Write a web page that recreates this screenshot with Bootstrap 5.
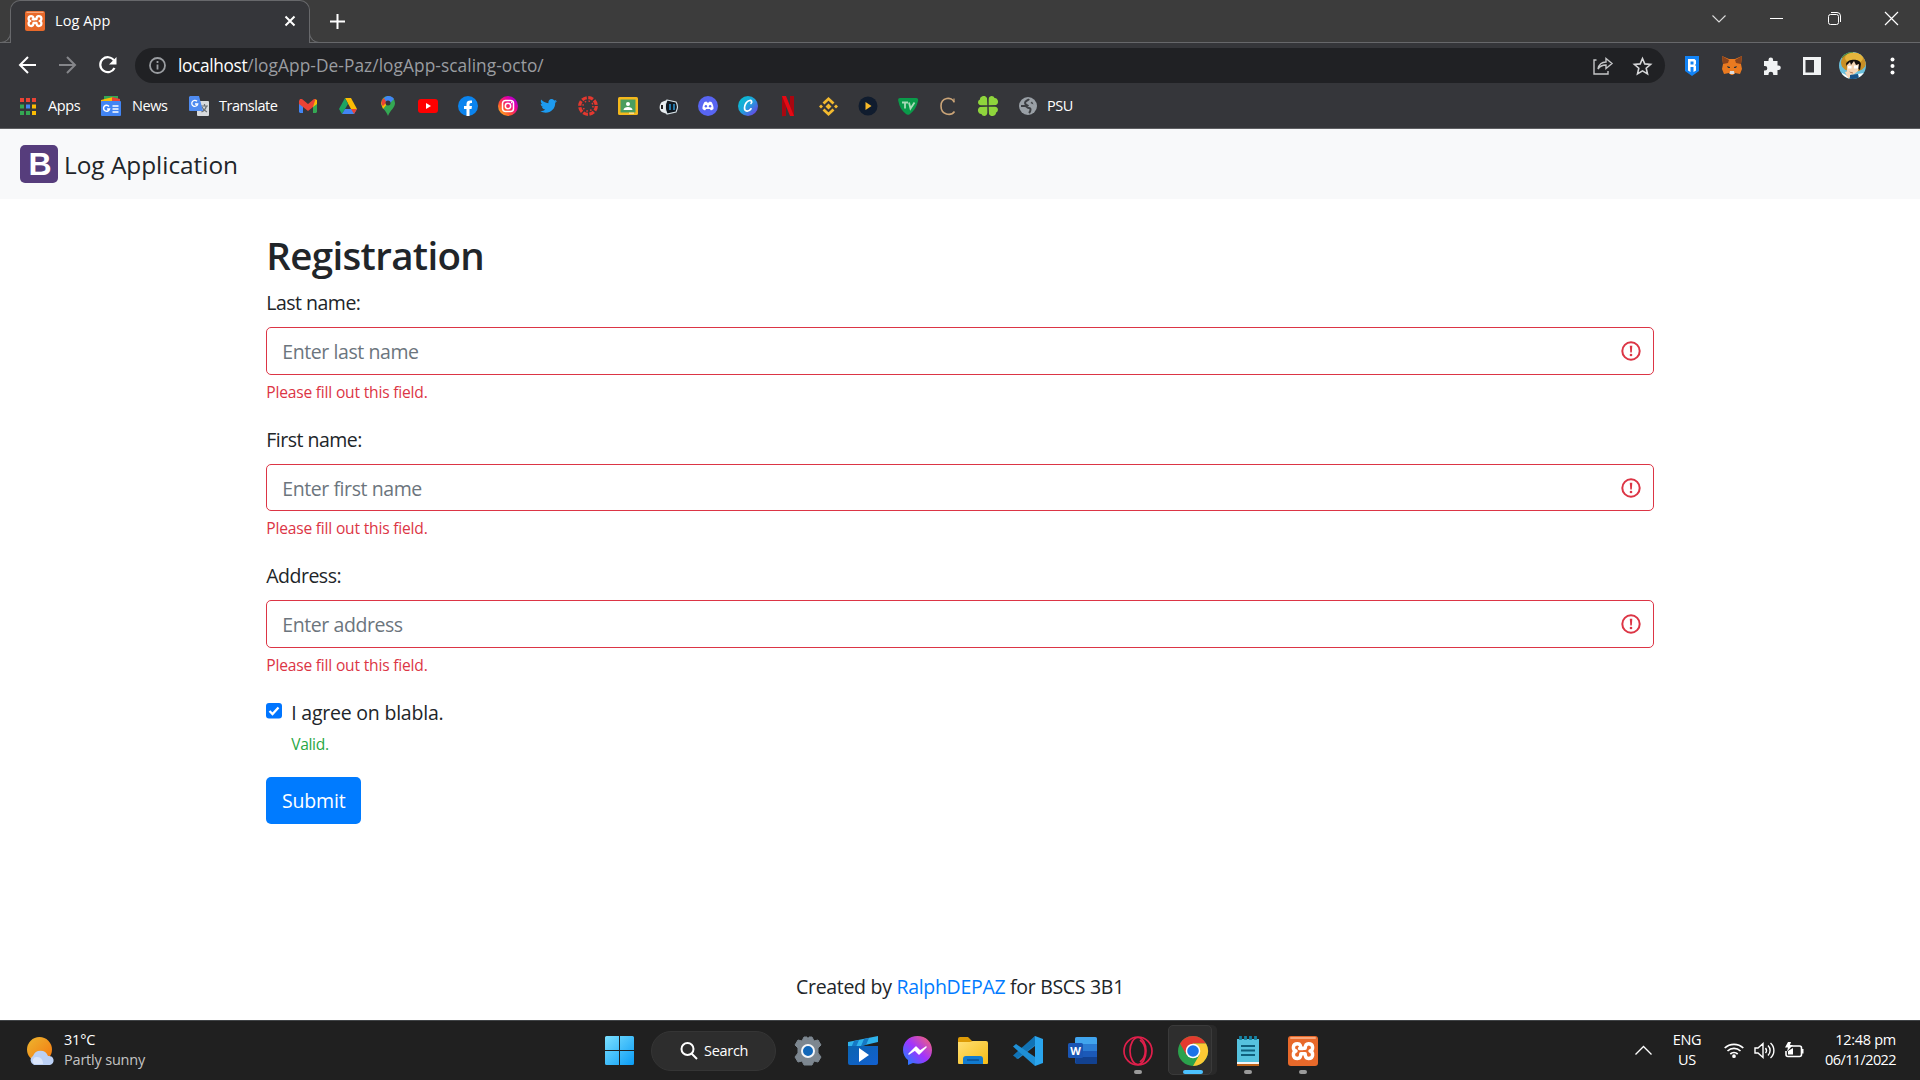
<!DOCTYPE html>
<html lang="en">
<head>
<meta charset="utf-8">
<title>Log App</title>
<link href="https://cdn.jsdelivr.net/npm/bootstrap@5.3.0/dist/css/bootstrap.min.css" rel="stylesheet">
<style>
html{font-size:20px}
body{width:1920px;height:1080px;overflow:hidden;background:#fff;color:#212529;font-family:"Open Sans","Noto Sans",sans-serif;font-size:19.5px;line-height:30px;letter-spacing:-.3px}
svg{display:block;flex:none;overflow:visible}
.defs{position:absolute}
.browser{font-size:14.5px;line-height:20px;letter-spacing:-.4px;color:#fff;background:#35363a}
.tabstrip{height:43px;background:#3c3c3c;padding-left:10px;box-shadow:inset 0 -1px #67686b}
.tab{position:relative;width:300px;height:43px;background:#35363a;border:1px solid #67686b;border-bottom:0;border-radius:10px 10px 0 0;padding:0 14px 2px;letter-spacing:.1px}
.tab::before,.tab::after{content:"";position:absolute;bottom:0;width:10px;height:10px;border:1px solid #67686b;border-top:0}
.tab::before{left:-10px;border-left:0;border-radius:0 0 10px 0}
.tab::after{right:-10px;border-right:0;border-radius:0 0 0 10px}
.newtab{margin-left:20px}
.winbtns{padding:0 22px 6px 0;gap:44.4px}
.toolbar{height:45px}
.omni{width:1530px;height:35px;border-radius:18px;background:#202124;font-size:17.3px;letter-spacing:-.35px}
.omni .dim{color:#9a9da1;letter-spacing:.07px}
.site{margin:0 12px 0 14px}
.star{margin:0 13px 0 20px}
.exts{margin-left:7px}
.marks{height:41px;padding:0 0 4px 20px;border-bottom:1px solid #5e5f62}
.cell40{width:40px;display:flex;justify-content:center;align-items:center}
.topnav{height:70px;background:#f8f9fa;padding:0 20px;font-size:24.4px;letter-spacing:-.02px}
.topnav span{margin-left:6px;padding-top:2px}
.regwrap{max-width:1425px;margin:0 auto;padding:30px 18.75px 0}
.regwrap h2{font-size:38.5px;font-weight:600;line-height:48px;margin:0 0 8px;padding-top:2px;letter-spacing:-.65px}
.regwrap label{padding-top:1px;margin-bottom:9px;display:block;letter-spacing:-.5px}
.form-control.is-invalid{height:47.5px;padding:8.5px 15px 6.5px;border:1px solid #dc3545;border-radius:5px;font-size:19.5px;letter-spacing:-.42px;line-height:30px;background-image:none;color:#6c757d}
.form-control::placeholder{color:#6c757d;opacity:1}
.fieldbox{position:relative}
.fieldbox svg{position:absolute;right:13px;top:14px}
.note{font-size:15.6px;line-height:24px;margin:5px 0 20px;letter-spacing:-.2px}
.red{color:#dc3545}.green{color:#28a745;margin:4px 0 21px;letter-spacing:-.35px}
.agree svg{margin-top:6.5px}
.said{margin-left:9px;padding-top:1px;letter-spacing:-.22px}
.btn-send,.btn-send:hover{background:#007bff;color:#fff;border-radius:5px;width:95px;height:47.500px;padding:1px 0 0;font-size:19.5px;letter-spacing:-.15px;line-height:45px;border:0}
.foot{margin-top:148px}
.foot a{color:#007bff;text-decoration:none}
.dock{height:60px;background:#202020;border-top:1px solid #404346;color:#fff;font-size:14.5px;line-height:20px;letter-spacing:-.3px}
.dock .two{padding-bottom:2px}
.weather{width:592px;padding-left:27px}
.weather .two{margin-left:9px;letter-spacing:-.2px}
.sky{color:#c4c4c4}
.cell55{width:55px;height:59px;position:relative;display:flex;align-items:center;justify-content:center;flex:none}
.run::after{content:"";position:absolute;left:24px;top:49px;width:8px;height:4px;border-radius:2px;background:#9a9a9a}
.active::after{left:18px;width:20px;background:#4cc2ff}
.active::before{content:"";position:absolute;left:2.5px;top:4px;width:44px;height:50px;border-radius:5px;background:#2e2e2e;border:1px solid #3a3a3a;box-shadow:5px 0 0 #292929}
.active svg{position:relative}
.pill{width:125px;height:40px;border-radius:20px;background:#2d2d2d;border:1px solid #353535;margin:0 4px;padding-left:28px}
.pill span{margin-left:6px}
.tray{padding-right:24px}
.lang{width:30px;margin:0 22px 0 20px}
.clock{width:92px}
.day{letter-spacing:-.6px}
</style>
</head>
<body class="d-flex flex-column">
<svg class="defs" width="0" height="0"><defs>
<symbol id="xampp" viewBox="0 0 30 30"><rect width="30" height="30" rx="3" fill="#e8692a"/><rect x="2" y="1" width="26" height="2" rx="1" fill="#f7a77c"/><path d="M15 12.500h-3.500M9.500 7.800C4 7.800 4.500 14 8 15C4.500 16 4 22.500 9.500 22.500C12.500 22.500 12.800 20 12.800 17.800H17.200C17.200 20 17.500 22.500 20.500 22.500C26 22.500 25.500 16 22 15C25.500 14 26 7.800 20.500 7.800C17.500 7.800 17.200 10 17.200 12.300H12.500C12.800 10 12.500 7.800 9.500 7.800" fill="none" stroke="#fff" stroke-width="3.400" stroke-linecap="round" stroke-linejoin="round"/></symbol>
<symbol id="alert" viewBox="0 0 20 20"><circle cx="10" cy="10" r="8.700" fill="none" stroke="#dc3545" stroke-width="2"/><path d="M8.800 4.800h2.500l-.5 6.700H9.300z" fill="#dc3545"/><circle cx="10" cy="14" r="1.300" fill="#dc3545"/></symbol>
<linearGradient id="ig" x1="0" y1="1" x2="1" y2="0"><stop offset="0" stop-color="#ffd521"/><stop offset=".35" stop-color="#ff5030"/><stop offset=".65" stop-color="#e8009c"/><stop offset="1" stop-color="#8a00f0"/></linearGradient>
<linearGradient id="cv" x1="0" y1="0" x2="1" y2="1"><stop offset="0" stop-color="#00c4cc"/><stop offset=".5" stop-color="#20a0dc"/><stop offset="1" stop-color="#7d2ae8"/></linearGradient>
<linearGradient id="wn" x1="0" y1="0" x2="1" y2="1"><stop offset="0" stop-color="#7be0ff"/><stop offset="1" stop-color="#0a9cf5"/></linearGradient>
<linearGradient id="ms" x1="0" y1="1" x2="1" y2="0"><stop offset="0" stop-color="#0a8cff"/><stop offset=".5" stop-color="#a033ff"/><stop offset="1" stop-color="#ff6968"/></linearGradient>
<linearGradient id="sn" x1="0" y1="0" x2="1" y2="1"><stop offset="0" stop-color="#ecb62f"/><stop offset="1" stop-color="#f5760f"/></linearGradient>
<linearGradient id="fo" x1="0" y1="0" x2="1" y2="1"><stop offset="0" stop-color="#ffdf74"/><stop offset="1" stop-color="#f7bd15"/></linearGradient>
<linearGradient id="mv" x1="0" y1="0" x2="1" y2="1"><stop offset="0" stop-color="#0b64b0"/><stop offset="1" stop-color="#1260d0"/></linearGradient>
</defs></svg>

<div class="browser">
  <div class="tabstrip d-flex align-items-center">
    <div class="tab d-flex align-items-center">
      <svg width="20" height="20"><use href="#xampp"/></svg><span class="ms-2 flex-grow-1">Log App</span>
      <svg width="10" height="10"><path d="M.5.5l9 9m0-9l-9 9" stroke="#fff" stroke-width="2"/></svg>
    </div>
    <svg class="newtab" width="15" height="15"><path d="M7.500 0v15M0 7.500h15" stroke="#fff" stroke-width="2"/></svg>
    <div class="winbtns d-flex align-items-center ms-auto">
      <svg width="13" height="8"><path d="M-.5.500l6.500 6.500 6.500-6.500" fill="none" stroke="#ddd" stroke-width="1.100"/></svg>
      <svg width="13" height="1"><path d="M0 .5h13" stroke="#fff"/></svg>
      <svg width="13" height="13"><path d="M3 .5h6a3.500 3.500 0 0 1 3.500 3.500v6" fill="none" stroke="#fff"/><rect x=".5" y="2.500" width="10" height="10" rx="2" fill="none" stroke="#fff"/></svg>
      <svg width="13" height="13"><path d="M0 0l13 13m0-13L0 13" stroke="#fff" stroke-width="1.200"/></svg>
    </div>
  </div>
  <div class="toolbar d-flex align-items-center">
    <svg width="135" height="45" fill="none" stroke-width="2"><path d="M36 22H20m8-8l-8 8 8 8" stroke="#fff"/><path d="M59 22h16m-8-8l8 8-8 8" stroke="#85868a"/><path d="M114 17.500A7.500 7.500 0 1 0 114.500 25" stroke="#fff" stroke-width="2.200"/><path d="M116.500 14v7.500H109z" fill="#fff"/></svg>
    <div class="omni d-flex align-items-center">
      <svg class="site" width="17" height="17" fill="none" stroke="#9a9da1" stroke-width="1.800"><circle cx="8.500" cy="8.500" r="7.500"/><path d="M8.500 7.500v5M8.500 4v2"/></svg>
      <span>localhost<span class="dim">/logApp-De-Paz/logApp-scaling-octo/</span></span>
      <svg class="ms-auto" width="20" height="18" fill="none" stroke="#c5c6c8" stroke-width="1.400"><path d="M3.500 3H1v14h14v-3"/><path d="M5 12c1-5 4-7 8-7V1.500l6 5-6 5V8c-4 0-6 1-8 4z"/></svg>
      <svg class="star" width="19" height="18" viewBox="0 0 19 18"><path d="M9.500 1.500l2.300 5.400 5.800.5-4.400 3.800 1.300 5.700-5-3-5 3 1.300-5.700L1.400 7.400l5.800-.5z" fill="none" stroke="#d5d6d8" stroke-width="1.600"/></svg>
    </div>
    <div class="exts d-flex align-items-center">
      <div class="cell40"><svg width="14" height="20"><path d="M0 0h14v15l-7 5-7-5z" fill="#1283f5"/><path d="M3 3h6.500L11 4.500V8l-1 1 1 1v4.500L8.500 16v-5h-3v5L3 14.500z" fill="#fff"/><path d="M5.500 5.500h3v3h-3z" fill="#1283f5"/></svg></div>
      <div class="cell40"><svg width="20" height="19" viewBox="0 0 20 19"><path d="M0 0l7 3h6l7-3-1 8 1 5-2 5-5-1-2 2H9l-2-2-5 1-2-5 1-5z" fill="#ea7a20"/><path d="M0 0l7 4-1 3-5 1zM20 0l-7 4 1 3 5 1z" fill="#8a431c"/><path d="M8 15h4l.500 3h-5z" fill="#ddd"/><path d="M5 10l3 1v1H6zM15 10l-3 1v1h2z" fill="#28333d"/></svg></div>
      <div class="cell40"><svg width="18" height="18" viewBox="0 0 18 18"><path d="M1 4h4.500V2.800a2.300 2.300 0 0 1 4.600 0V4h4.400v4.500h1a2.300 2.300 0 0 1 0 4.600h-1V18h-4.300v-1a2.300 2.300 0 0 0-4.700 0v1H1v-4.500h1a2.300 2.300 0 0 0 0-4.600H1z" fill="#f1f3f4"/></svg></div>
      <div class="cell40"><svg width="18" height="18"><path fill="#f1f3f4" fill-rule="evenodd" d="M0 0h18v18H0zM2.500 3v12.500H11V3z"/></svg></div>
      <div class="cell40"><svg width="27" height="27" viewBox="0 0 27 27"><clipPath id="av"><circle cx="13.500" cy="13.500" r="13.500"/></clipPath><g clip-path="url(#av)"><path fill="#6bc0dc" d="M0 0h27v27H0z"/><path fill="#4d8a3c" d="M0 0h14v6H0z"/><ellipse cx="14.500" cy="10.500" rx="12.500" ry="9.500" fill="#c98f25"/><ellipse cx="15" cy="6" rx="9" ry="5.500" fill="#e5b53c"/><path fill="#17110f" d="M7 12c1-5 14-6 15 0l-1 6-3-2-9 1z"/><path d="M8 13l3-3 1 3 3-4 2 4 3-1-1 7-5 4-6-3z" fill="#f6d5b5"/><path fill="#fff" d="M9 14h3.500v2.500H9zM15 13.500h4v3h-4z"/><path d="M10 20l4 1" stroke="#b5794f"/><path fill="#f6d5b5" d="M6 20l4-1 3 4-4 4z"/><path fill="#fff" d="M3 21l4 2 3 4H3zM19 22l6-1v6h-5z"/><path fill="#195388" d="M11 23l8-1 1 5h-9z"/></g></svg></div>
      <div class="cell40"><svg width="4" height="18" fill="#fff"><circle cx="2.500" cy="2.500" r="2"/><circle cx="2.500" cy="9" r="2"/><circle cx="2.500" cy="15.500" r="2"/></svg></div>
    </div>
  </div>
  <div class="marks d-flex align-items-center">
    <svg width="16" height="17"><g fill="#ea4335"><path d="M0 0h4v4H0zM6 0h4v4H6zM12 0h4v4h-4z"/></g><path fill="#34a853" d="M0 6.500h4v4H0zM0 13h4v4H0z"/><path fill="#4285f4" d="M6 6.500h4v4H6z"/><path fill="#34a853" d="M6 13h4v4H6z"/><path fill="#fbbc04" d="M12 6.500h4v4h-4zM12 13h4v4h-4z"/></svg>
    <span style="width:53px;margin-left:12px">Apps</span>
    <svg width="20" height="20"><path fill="#34a853" d="M3 0h14v4H3z"/><path fill="#fbbc04" d="M0 4l12-3 2 5H0z"/><path fill="#ea4335" d="M11 1l8 2v3h-8z"/><rect y="5" width="20" height="15" rx="1" fill="#4285f4"/><path d="M8 10.500a3 3 0 1 0 .5 2.500H6M11.500 10h6M11.500 13h6M11.500 16h6" fill="none" stroke="#fff" stroke-width="1.500"/></svg>
    <span style="width:57px;margin-left:11px">News</span>
    <svg width="20" height="20"><rect x="8" y="5" width="12" height="15" rx="1" fill="#d8dadd"/><path d="M12 10h7M15.500 8v2M17.500 10c-1 4-3 5-5 6M13 11c1 3 3 4 5 5" stroke="#6d7378" stroke-width="1.200" fill="none"/><path d="M1 0h9l4 15H1a1 1 0 0 1-1-1V1z" fill="#4f8bf0"/><path d="M8 5.300A3 3 0 1 0 8.700 8H6" fill="none" stroke="#fff" stroke-width="1.300"/></svg>
    <span style="width:69px;margin-left:10px;letter-spacing:-.5px">Translate</span>
    <div class="cell40"><svg width="18" height="14"><path d="M0 2h4v12H1l-1-1z" fill="#4285f4"/><path d="M14 2h4v11l-1 1h-3z" fill="#34a853"/><path d="M14 2l2-2 2 1v4l-4 3z" fill="#fbbc04"/><path d="M0 2l1-2h2l6 5 6-5 1.500 0L14 8l-5 4-5-4-4-3z" fill="#ea4335"/></svg></div>
    <div class="cell40"><svg width="18" height="16"><path d="M6 0h6l6 11h-6z" fill="#fbbc04"/><path d="M6 0L0 11l3 5 6-10z" fill="#1da462"/><path d="M6 11h12l-3 5H3z" fill="#4285f4"/><path d="M12 11h6l-3 5z" fill="#ea4335"/></svg></div>
    <div class="cell40"><svg width="14" height="20"><path d="M7 0a7 7 0 0 1 7 7c0 5-5 7-7 13C5 14 0 12 0 7a7 7 0 0 1 7-7z" fill="#34a853"/><path d="M0 7l3-5 4 5-5 6z" fill="#fbbc04"/><path d="M1 4l2-2 4 3-5 5C0 9 0 6 1 4z" fill="#ea4335"/><path d="M3 2c4-4 9-1 10 1L7 9z" fill="#4285f4"/><circle cx="7" cy="7" r="2.500" fill="#35363a"/></svg></div>
    <div class="cell40"><svg width="20" height="14"><rect width="20" height="14" rx="3" fill="#f00"/><path d="M8 4l5 3-5 3z" fill="#fff"/></svg></div>
    <div class="cell40"><svg width="20" height="20"><circle cx="10" cy="10" r="10" fill="#0b84ee"/><path d="M8.500 20v-7H6v-3h2.500V8c0-3 2-4 5.500-3.500V7c-2 0-2.500 0-2.500 3H14l-.5 3h-2v7z" fill="#fff"/></svg></div>
    <div class="cell40"><svg width="20" height="20" fill="none" stroke="#fff" stroke-width="1.500"><circle cx="10" cy="10" r="10" fill="url(#ig)" stroke="none"/><rect x="4.500" y="4.500" width="11" height="11" rx="3"/><circle cx="10" cy="10" r="2.700"/><path d="M13 6.500h1"/></svg></div>
    <div class="cell40"><svg width="17" height="14" viewBox="0 0 17 14"><path d="M17 2c-.7.300-1.300.4-2 .5.700-.4 1.200-1 1.500-1.800-.7.400-1.400.7-2.200.8C13.500.500 12.500 0 11.700 0 9.500 0 8 2 8.400 4.300 5.500 4.100 3 2.800 1.200.600c-.8 1.500-.4 3.500 1.100 4.600L.700 4.700c0 1.600 1.200 3 2.800 3.400H2c.4 1.400 1.700 2.400 3.200 2.400C3.800 11.700 2 12.300 0 12.100 7.500 16.500 15.500 11.500 15.200 3.800 16 3.300 16.600 2.700 17 2z" fill="#1d9bf0"/></svg></div>
    <div class="cell40"><svg width="20" height="20" fill="none" stroke="#e4382f"><circle cx="10" cy="10" r="8.300" stroke-width="3.200" stroke-dasharray="5 1.520"/><circle cx="10" cy="10" r="5" stroke-width="1.500" stroke-dasharray="1.500 2.420"/></svg></div>
    <div class="cell40"><svg width="20" height="18"><rect width="20" height="18" rx="1.500" fill="#f4b81c"/><rect x="2.500" y="2.500" width="15" height="13" fill="#4a9d5f"/><circle cx="10" cy="7" r="2" fill="#fff"/><path d="M5.500 13c0-4 9-4 9 0z" fill="#fff"/><path d="M11 15.500h5v1.500h-5z" fill="#f9dc8c"/></svg></div>
    <div class="cell40"><svg width="19" height="17"><path d="M8 2l9 2c2 3 1.500 7 0 10l-9 2C6 12 6 6 8 2z" fill="#101820" stroke="#d5e0e5" stroke-width="1.200"/><path d="M4 3.500l4-1.500c-2 4-2 10 0 14l-4-1.500C-.5 13.500-.5 5 4 3.500z" fill="#e8edf0"/><path d="M3 7v4" stroke="#222" stroke-width="2"/><path d="M11 6v6M15 6v6" stroke="#2b8fc9" stroke-width="1.600"/></svg></div>
    <div class="cell40"><svg width="20" height="20"><circle cx="10" cy="10" r="10" fill="#5865f2"/><path d="M6.500 6l2-.6.500 1h2l.5-1 2 .6c1.500 2 2.200 5 2 7-1 .9-2 1.200-2.800 1.200l-.8-1.200H8.100l-.8 1.200c-1 0-1.800-.3-2.800-1.200-.2-2 .5-5 2-7z" fill="#fff"/><circle cx="7.900" cy="10.300" r="1.200" fill="#5865f2"/><circle cx="12.100" cy="10.300" r="1.200" fill="#5865f2"/></svg></div>
    <div class="cell40"><svg width="20" height="20"><circle cx="10" cy="10" r="10" fill="url(#cv)"/><path d="M13 7.500c1.500-1.500.5-3.500-1.500-3-3 .5-5 4.500-5 7.500 0 4 4.500 4 6.500.8" fill="none" stroke="#fff" stroke-width="1.700" stroke-linecap="round"/></svg></div>
    <div class="cell40"><svg width="12" height="20"><path d="M0 0h4v20l-4 .300zM8 0h4v20l-4-.300z" fill="#a80710"/><path d="M0 0h4l8 20H8z" fill="#e50914"/></svg></div>
    <div class="cell40"><svg width="19" height="19" viewBox="0 0 19 19"><path d="M4.500 6.500L9.500 1.800l5 4.700M4.500 12.500l5 4.700 5-4.700" fill="none" stroke="#f3ba2f" stroke-width="2.800"/><path d="M9.500 6.500l3 3-3 3-3-3zM2 7.500l2 2-2 2-2-2zM17 7.500l2 2-2 2-2-2z" fill="#f3ba2f"/></svg></div>
    <div class="cell40"><svg width="20" height="20"><circle cx="10" cy="10" r="9.500" fill="#101c2e"/><path d="M7.500 6l6 4-6 4z" fill="#f7b928"/></svg></div>
    <div class="cell40"><svg width="20" height="17"><path d="M2 0h16c2 0 2.500 1.500 2 3-1.500 6-4 10-8 13-1.500 1.200-3 1-4 0C4 13 1.500 9 .3 3-.2 1 .5 0 2 0z" fill="#0a9b4a"/><path d="M4 4.500h6M7 4.500V10.500M11 4.500l1.500 6 4-6" fill="none" stroke="#a8dcb8" stroke-width="1.800"/></svg></div>
    <div class="cell40"><svg width="16" height="18"><path d="M14 5C12-.5 1 0 1 9s10 10.500 13.500 5.500" fill="none" stroke="#cba578" stroke-width="1.600"/><path d="M14 1.500V5.500" stroke="#cba578" stroke-width="1.200"/></svg></div>
    <div class="cell40"><svg width="20" height="20"><g fill="#8fd53c"><path id="leaf" d="M9.300 9.300H3C-1 9-.5 4 2 3.500 1.500.500 7-2 9 2z"/><use href="#leaf" transform="rotate(90 10 10)"/><use href="#leaf" transform="rotate(180 10 10)"/><use href="#leaf" transform="rotate(270 10 10)"/></g></svg></div>
    <div class="cell40"><svg width="18" height="18"><circle cx="9" cy="9" r="9" fill="#9aa0a6"/><path d="M10 2c-1 2-4 1-4 4 0 2 3 2 3 3M2 9h4c2 0 2 2 4 2s2 3 0 5" fill="none" stroke="#3d3f43" stroke-width="2"/><path d="M11.500 6l3 1.500-1.500-3" fill="#3d3f43"/></svg></div>
    <span style="margin-left:-1px">PSU</span>
  </div>
</div>

<nav class="topnav d-flex align-items-center">
  <svg width="38" height="38"><rect width="38" height="38" rx="5" fill="#563d7c"/><text x="20" y="30" text-anchor="middle" font-family="Liberation Sans,sans-serif" font-weight="700" font-size="32" fill="#fff">B</text></svg>
  <span>Log Application</span>
</nav>

<main class="regwrap w-100 flex-grow-1">
  <h2>Registration</h2>
  <label for="last">Last name:</label>
  <div class="fieldbox"><input id="last" class="form-control is-invalid" placeholder="Enter last name"><svg width="20" height="20"><use href="#alert"/></svg></div>
  <div class="note red">Please fill out this field.</div>
  <label for="first">First name:</label>
  <div class="fieldbox"><input id="first" class="form-control is-invalid" placeholder="Enter first name"><svg width="20" height="20"><use href="#alert"/></svg></div>
  <div class="note red">Please fill out this field.</div>
  <label for="addr">Address:</label>
  <div class="fieldbox"><input id="addr" class="form-control is-invalid" placeholder="Enter address"><svg width="20" height="20"><use href="#alert"/></svg></div>
  <div class="note red">Please fill out this field.</div>
  <div class="agree d-flex">
    <svg width="16" height="16"><rect width="16" height="15.500" rx="3" fill="#0075ff"/><path d="M3.500 8l3 3L12.500 4.500" fill="none" stroke="#fff" stroke-width="2.300"/></svg>
    <div class="said"><div>I agree on blabla.</div><div class="note green">Valid.</div></div>
  </div>
  <button class="btn btn-send">Submit</button>
  <div class="foot text-center">Created by <a href="#">RalphDEPAZ</a> for BSCS 3B1</div>
</main>

<footer class="dock d-flex align-items-center">
  <div class="weather d-flex align-items-center">
    <svg width="28" height="28"><circle cx="12.500" cy="12.500" r="12.500" fill="url(#sn)"/><path d="M7 28a5 5 0 0 1-1-9 8 8 0 0 1 15 0 4.500 4.500 0 0 1 2 9z" fill="#bcd1f6"/><path d="M7 27a4 4 0 0 1 3-7c4 0 6 3 6 7z" fill="#dbe6fb"/></svg>
    <div class="two"><div>31°C</div><div class="sky">Partly sunny</div></div>
  </div>
  <div class="cell55"><svg width="29" height="29" fill="url(#wn)"><path d="M1.500 0H14v14H0V1.500A1.500 1.500 0 0 1 1.500 0zM15 0h12.500A1.500 1.500 0 0 1 29 1.500V14H15zM0 15h14v14H1.500A1.500 1.500 0 0 1 0 27.500zM15 15h14v12.500a1.500 1.500 0 0 1-1.500 1.500H15z"/></svg></div>
  <div class="pill d-flex align-items-center"><svg width="18" height="18" fill="none" stroke="#fff" stroke-width="2"><circle cx="7.500" cy="7" r="6"/><path d="M11.500 11.500l5.500 5.500"/></svg><span>Search</span></div>
  <div class="cell55"><svg width="30" height="30" viewBox="0 0 30 30"><path d="M11 1h3l1 3 1-3h3l2 4 4-1 3 5-3 3v5l3 4-3 5-4-1-2 4h-8l-2-4-4 1-3-5 3-4v-5L2 9l3-5 4 1z" fill="#7d8790" stroke="#7d8790" stroke-linejoin="round"/><circle cx="15" cy="15" r="6" fill="#1267b8" stroke="#f4f6f8" stroke-width="2"/></svg></div>
  <div class="cell55"><svg width="30" height="29"><path d="M0 6L30 0v6L0 13z" fill="#2fb3ec"/><path d="M6 5l5-1-3 7-5 1zM16 3l5-1-3 7-5 1z" fill="#1579c5"/><path d="M0 10h30v17a2 2 0 0 1-2 2H2a2 2 0 0 1-2-2z" fill="url(#mv)"/><path d="M11 12l10 7-10 7z" fill="#fff"/></svg></div>
  <div class="cell55"><svg width="29" height="29"><path d="M14.500 0C6 0 0 6 0 14c0 4 2 8 5 10v5l5-2c10 3 19-3 19-13C29 6 23 0 14.500 0z" fill="url(#ms)"/><path d="M6 18l7-7 4 4 6-4-7 7-4-4z" fill="#fff" stroke="#fff" stroke-width="1.500" stroke-linejoin="round"/></svg></div>
  <div class="cell55"><svg width="30" height="28"><path d="M0 2a2 2 0 0 1 2-2h8l4 4h13v5H0z" fill="#dd9a06"/><path d="M0 5h12l3-1h13a2 2 0 0 1 2 2v20a1 1 0 0 1-1 1H1a1 1 0 0 1-1-1z" fill="url(#fo)"/><path d="M5 22a3 3 0 0 1 3-3h14a3 3 0 0 1 3 3v5H5z" fill="#117bd0"/><path d="M9 23h12" stroke="#0a4f93" stroke-width="1.500"/></svg></div>
  <div class="cell55"><svg width="30" height="30" viewBox="0 0 30 30"><path d="M3 22L22 0v10L5 23z" fill="#2489ca"/><path d="M0 19.500L22 0v9L4 22.500z" fill="#1173b5"/><path d="M0 10.500L3 8l19 13v9z" fill="#1f90d6"/><path d="M22 0l8 3v24l-8 3V0z" fill="#2aa5ee"/></svg></div>
  <div class="cell55"><svg width="29" height="28"><rect x="7" width="22" height="27" rx="2" fill="#1b59b8"/><path d="M7 2a2 2 0 0 1 2-2h18a2 2 0 0 1 2 2v5H7z" fill="#41a5ee"/><path d="M7 7h22v7H7z" fill="#2b7cd3"/><path d="M7 20h22v6a1 1 0 0 1-1 1H8z" fill="#12418f"/><rect y="6" width="15" height="15" rx="1.500" fill="#1a55b3"/><text x="7.500" y="17.500" font-family="Open Sans,sans-serif" font-weight="700" font-size="11" text-anchor="middle" letter-spacing="0" fill="#fff">W</text></svg></div>
  <div class="cell55 run"><svg width="30" height="30" fill="none" stroke="#e01f4b"><circle cx="15" cy="15" r="14" stroke-width="1.700"/><ellipse cx="15" cy="15" rx="8" ry="13.500" stroke-width="1.700"/><path d="M17 4c7 5 7 17 0 22" stroke-width="1.700"/></svg></div>
  <div class="cell55 active run"><svg width="30" height="30" viewBox="0 0 30 30"><circle cx="15" cy="15" r="15" fill="#2ba24c"/><path d="M2 7.500A15 15 0 0 1 28 7.500H15L8.500 19z" fill="#e33b2e"/><path d="M28 7.500A15 15 0 0 1 15 30l6.500-11.300L15 7.500z" fill="#fcc934"/><circle cx="15" cy="15" r="7.300" fill="#fff"/><circle cx="15" cy="15" r="5.800" fill="#1a73e8"/></svg></div>
  <div class="cell55 run"><svg width="22" height="30"><path d="M0 3h22v25H0z" fill="#56c2de"/><path d="M0 26h22v2H0z" fill="#f5f5f5"/><path d="M0 28h22v2H0z" fill="#c0651a"/><path d="M4 10h14M4 14.500h14M4 19h14" stroke="#0f5f7c" stroke-width="2"/><path d="M3.500 0v4M8.500 0v4M13.500 0v4M18.500 0v4" stroke="#1583a4" stroke-width="2.800"/></svg></div>
  <div class="cell55 run"><svg width="30" height="30"><use href="#xampp"/></svg></div>
  <div class="tray d-flex align-items-center ms-auto">
    <svg width="17" height="9"><path d="M.5 8.500l8-8 8 8" fill="none" stroke="#fff" stroke-width="1.300"/></svg>
    <div class="lang two text-center"><div>ENG</div><div>US</div></div>
    <svg width="20" height="15" fill="none" stroke="#fff" stroke-width="1.700"><path d="M.7 5a13.500 13.500 0 0 1 18.600 0M3.500 8a9.500 9.500 0 0 1 13 0M6.300 11a5.500 5.500 0 0 1 7.400 0"/><circle cx="10" cy="13.200" r="1" fill="#fff"/></svg>
    <svg width="20" height="17" style="margin-left:10px" fill="none" stroke="#fff" stroke-width="1.400"><path d="M1 6h3l5-4.500v14L4 11H1zM11.500 6a4 4 0 0 1 0 5M14 3.500a7 7 0 0 1 0 10M16.500 1a10 10 0 0 1 0 15"/></svg>
    <svg width="20" height="17" style="margin-left:10px" fill="none" stroke="#fff" stroke-width="1.600"><path d="M7 4h8.500a2 2 0 0 1 2 2v6.500a2 2 0 0 1-2 2H4a2 2 0 0 1-2-2V9"/><path d="M18 7h1.500v4.500H18zM4 9l5-3v6.500H4z" fill="#fff" stroke="none"/><path d="M4 0h3L6 3h3L3 9.500l1-4H1z" fill="#fff" stroke="none"/></svg>
    <div class="clock two text-end"><div>12:48 pm</div><div class="day">06/11/2022</div></div>
  </div>
</footer>
<script src="https://cdn.jsdelivr.net/npm/bootstrap@5.3.0/dist/js/bootstrap.bundle.min.js"></script>
</body>
</html>
